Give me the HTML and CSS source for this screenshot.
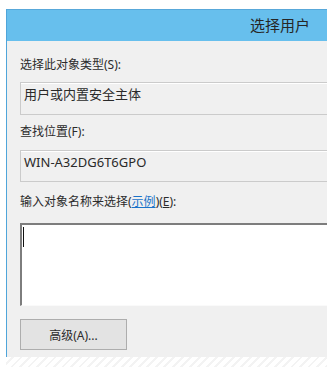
FILE: index.html
```html
<!DOCTYPE html>
<html lang="zh-CN">
<head>
    <meta charset="UTF-8">
    <meta name="viewport" content="width=device-width, initial-scale=1.0">
    <title>选择用户</title>
    <link rel="stylesheet" href="styles.css">
</head>
<body>

    <div class="dialogo">
        <div class="titulo">选择用户</div>
        <div class="cuerpo">
            <div class="etiqueta">选择此对象类型(S):</div>
            <div class="caja">用户或内置安全主体</div>

            <div class="etiqueta etiqueta-2">查找位置(F):</div>
            <div class="caja caja-latin">WIN-A32DG6T6GPO</div>

            <div class="etiqueta etiqueta-3">输入对象名称来选择(<a href="#" class="enlace">示例</a>)(<u>E</u>):</div>
            <div class="entrada"><span class="cursor"></span></div>

            <button class="boton">高级(A)...</button>
        </div>
    </div>
    <div class="rayas"></div>

</body>
</html>
```

FILE: styles.css
```css
html, body { margin: 0; padding: 0; }
body { background-color: #fff; font-family: "Noto Sans", "Noto Sans CJK SC", sans-serif; color: #2b2b2b; }

.dialogo { margin: 9px 0 0 6px; width: 321px; border-left: 1px solid #4fa5da; box-sizing: border-box; }
.titulo { height: 31px; background-color: #67bfed; border-top: 1px solid #58a8da; padding-left: 243px; font-size: 15px; line-height: 31px; color: #262626; }

.cuerpo { background-color: #f0f0f0; height: 316px; padding: 16px 0 0 13px; box-sizing: border-box; }

.etiqueta { font-size: 12px; line-height: 16px; height: 16px; }
.etiqueta-2 { margin-top: 9px; }
.etiqueta-3 { margin-top: 12px; }
.enlace { color: #1a73c9; text-decoration: underline; }

.caja { margin-top: 9px; height: 33px; border: 1px solid #cbcbcb; border-right: 0; box-shadow: inset 0 1px 0 #fff; padding: 2px 0 0 3px; box-sizing: border-box; font-size: 13px; line-height: 18px; color: #2a2a2a; }
.caja-latin { margin-top: 10px; height: 32px; }

.entrada { margin-top: 13px; height: 83px; background-color: #fff; border-top: 2px solid #7d7d7d; border-left: 2px solid #7d7d7d; border-bottom: 1px solid #fafafa; box-sizing: border-box; padding: 2px 0 0 1px; }
.cursor { display: block; width: 1px; height: 20px; background-color: #111; }

.boton { display: block; margin-top: 13px; width: 107px; height: 31px; background-color: #e3e3e3; border: 1px solid #adadad; border-radius: 0; font-family: "Noto Sans", "Noto Sans CJK SC", sans-serif; font-size: 12px; color: #2b2b2b; padding: 0; cursor: pointer; }
.boton:active { background-color: #ddd; }

.rayas { margin-left: 6px; height: 12px; background: repeating-linear-gradient(135deg, #fff 0, #fff 4px, #f3f3f3 4px, #f3f3f3 6px); }
```
